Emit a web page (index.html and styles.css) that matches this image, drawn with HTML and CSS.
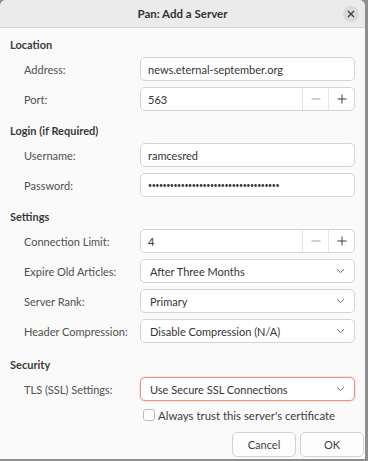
FILE: index.html
```html
<!DOCTYPE html>
<html>
<head>
<meta charset="utf-8">
<link rel="stylesheet" href="styles.css">
</head>
<body>
<div class="window">
  <header class="titlebar">
    <span class="title">Pan: Add a Server</span>
    <button class="close" aria-label="Close">
      <svg width="8" height="8" viewBox="0 0 8 8"><path d="M1 1L7 7M7 1L1 7" stroke="#3a3a3a" stroke-width="1.3" fill="none"/></svg>
    </button>
  </header>
  <main class="content">
    <section class="group first">
      <h2 class="heading">Location</h2>
      <div class="row"><span class="label">Address:</span><div class="entry"><span class="value">news.eternal-september.org</span></div></div>
      <div class="row"><span class="label">Port:</span><div class="entry spin"><span class="value">563</span><span class="spin-btn minus"><svg width="10" height="10" viewBox="0 0 10 10"><path d="M0.5 5H9.5" stroke="#a3a3a3" stroke-width="1"/></svg></span><span class="spin-btn"><svg width="10" height="10" viewBox="0 0 10 10"><path d="M0.5 5H9.5M5 0.5V9.5" stroke="#3e3e3e" stroke-width="1"/></svg></span></div></div>
    </section>
    <section class="group">
      <h2 class="heading">Login (if Required)</h2>
      <div class="row"><span class="label">Username:</span><div class="entry"><span class="value">ramcesred</span></div></div>
      <div class="row"><span class="label">Password:</span><div class="entry"><span class="value dots">••••••••••••••••••••••••••••••••••••</span></div></div>
    </section>
    <section class="group">
      <h2 class="heading">Settings</h2>
      <div class="row"><span class="label">Connection Limit:</span><div class="entry spin"><span class="value">4</span><span class="spin-btn minus"><svg width="10" height="10" viewBox="0 0 10 10"><path d="M0.5 5H9.5" stroke="#a3a3a3" stroke-width="1"/></svg></span><span class="spin-btn"><svg width="10" height="10" viewBox="0 0 10 10"><path d="M0.5 5H9.5M5 0.5V9.5" stroke="#3e3e3e" stroke-width="1"/></svg></span></div></div>
      <div class="row"><span class="label">Expire Old Articles:</span><div class="entry combo"><span class="value">After Three Months</span><svg class="chev" width="9" height="6" viewBox="0 0 9 6"><path d="M1 1.2L4.5 4.6L8 1.2" stroke="#6a6a6a" stroke-width="1" fill="none"/></svg></div></div>
      <div class="row"><span class="label">Server Rank:</span><div class="entry combo"><span class="value">Primary</span><svg class="chev" width="9" height="6" viewBox="0 0 9 6"><path d="M1 1.2L4.5 4.6L8 1.2" stroke="#6a6a6a" stroke-width="1" fill="none"/></svg></div></div>
      <div class="row"><span class="label">Header Compression:</span><div class="entry combo"><span class="value">Disable Compression (N/A)</span><svg class="chev" width="9" height="6" viewBox="0 0 9 6"><path d="M1 1.2L4.5 4.6L8 1.2" stroke="#6a6a6a" stroke-width="1" fill="none"/></svg></div></div>
    </section>
    <section class="group security">
      <h2 class="heading">Security</h2>
      <div class="row"><span class="label">TLS (SSL) Settings:</span><div class="entry combo focused"><span class="value">Use Secure SSL Connections</span><svg class="chev" width="9" height="6" viewBox="0 0 9 6"><path d="M1 1.2L4.5 4.6L8 1.2" stroke="#6a6a6a" stroke-width="1" fill="none"/></svg></div></div>
      <div class="check-row"><span class="checkbox"></span><span class="check-label">Always trust this server's certificate</span></div>
    </section>
    <div class="actions">
      <button class="btn">Cancel</button>
      <button class="btn">OK</button>
    </div>
  </main>
</div>
</body>
</html>
```
FILE: styles.css
```css
* { box-sizing: border-box; }
html, body { margin: 0; padding: 0; }
body {
  width: 368px;
  height: 461px;
  background: #8e8e8e;
  font-family: "Lato", "Noto Sans", sans-serif;
  font-size: 11px;
  color: #3d3d3d;
  overflow: hidden;
}
.window {
  width: 365px;
  height: 459px;
  background: #fafafa;
  border-top-left-radius: 6px;
  border-top-right-radius: 6px;
  overflow: hidden;
  display: flex;
  flex-direction: column;
}
.titlebar {
  height: 28px;
  flex: none;
  background: #ebebeb;
  border-bottom: 1px solid #d3d3d3;
  display: flex;
  align-items: center;
  justify-content: center;
  position: relative;
}
.title {
  font-weight: bold;
  font-size: 11.5px;
  color: #333;
}
.close {
  position: absolute;
  right: 6px;
  top: 6px;
  width: 16px;
  height: 16px;
  border-radius: 50%;
  border: none;
  padding: 0;
  background: #dadada;
  display: flex;
  align-items: center;
  justify-content: center;
}
.content {
  flex: 1;
  padding: 9px 1px 0 10px;
  display: flex;
  flex-direction: column;
}
.group { display: flex; flex-direction: column; gap: 6px; margin-top: 12px; }
.group.first { margin-top: 0; }
.group.security { margin-top: 14px; }
.heading {
  margin: 0 0 -2px 0;
  height: 16px;
  line-height: 16px;
  font-size: 11px;
  font-weight: bold;
  color: #3a3a3a;
}
.row {
  display: flex;
  align-items: center;
  height: 24px;
}
.label {
  width: 130px;
  padding-left: 14px;
  color: #505050;
  flex: none;
}
.entry {
  width: 215px;
  height: 24px;
  background: #fff;
  border: 1px solid #d4d4d4;
  border-radius: 5px;
  display: flex;
  align-items: center;
  padding-left: 7px;
  color: #353535;
}
.entry .value { flex: 1; white-space: nowrap; }
.spin-btn {
  width: 26px;
  height: 100%;
  border-left: 1px solid #e4e4e4;
  display: flex;
  align-items: center;
  justify-content: center;
}
.entry.combo { padding-left: 9px; padding-right: 9px; }
.chev { flex: none; }
.entry.focused {
  border-color: #e59a82;
  box-shadow: 0 0 0 1px rgba(233, 150, 120, 0.25);
}
.dots { font-size: 7px; letter-spacing: -0.42px; }
.check-row {
  display: flex;
  align-items: center;
  margin-left: 133px;
  gap: 3px;
  height: 16px;
}
.checkbox {
  width: 12px;
  height: 12px;
  border: 1px solid #bdbdbd;
  border-radius: 3px;
  background: #fff;
}
.check-label { font-size: 11.4px; color: #3d3d3d; }
.actions {
  margin-top: auto;
  margin-bottom: 2px;
  display: flex;
  justify-content: flex-end;
  gap: 4px;
}
.btn {
  width: 64px;
  height: 25px;
  background: #fdfdfd;
  border: 1px solid #d2d2d2;
  border-radius: 5px;
  font-family: inherit;
  font-size: 11px;
  color: #3d3d3d;
  padding: 0;
}
```
